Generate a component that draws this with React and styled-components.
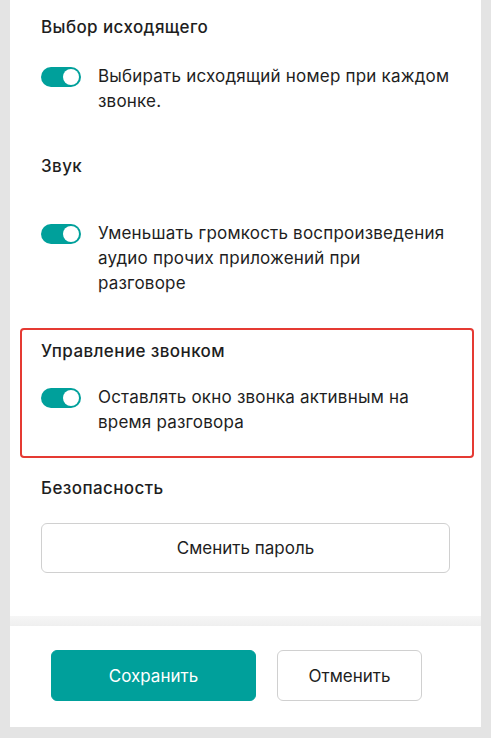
import React, { useState } from 'react';
import styled, { createGlobalStyle } from 'styled-components';

const GlobalStyle = createGlobalStyle`
  html, body {
    margin: 0;
    padding: 0;
    background: #e4e4e4;
  }
  body {
    font-family: Inter, "Noto Sans", sans-serif;
    color: #1e1e1e;
  }
`;

const settings = [
  {
    id: 'outgoing',
    title: 'Выбор исходящего',
    label: 'Выбирать исходящий номер при каждом звонке.',
    gap: 25,
    after: 40,
  },
  {
    id: 'sound',
    title: 'Звук',
    label: 'Уменьшать громкость воспроизведения аудио прочих приложений при разговоре',
    gap: 43,
    after: 32,
  },
  {
    id: 'call',
    title: 'Управление звонком',
    label: 'Оставлять окно звонка активным на время разговора',
    gap: 22,
    after: 18,
    highlighted: true,
  },
];

function App() {
  const [values, setValues] = useState({ outgoing: true, sound: true, call: true });

  const toggle = (id) => {
    setValues((v) => ({ ...v, [id]: !v[id] }));
  };

  return (
    <>
      <GlobalStyle />
      <Page>
        <Panel>
          <Content>
            {settings.map((s) => (
              <Section key={s.id} $after={s.after} $highlighted={s.highlighted}>
                <Title>{s.title}</Title>
                <Row $gap={s.gap}>
                  <Switch $on={values[s.id]} onClick={() => toggle(s.id)}>
                    <Knob $on={values[s.id]} />
                  </Switch>
                  <Label>{s.label}</Label>
                </Row>
              </Section>
            ))}

            <Section $after={0}>
              <Title>Безопасность</Title>
              <WideButton>Сменить пароль</WideButton>
            </Section>
          </Content>

          <Shade />

          <Footer>
            <Button $primary>Сохранить</Button>
            <Button>Отменить</Button>
          </Footer>
        </Panel>
      </Page>
    </>
  );
}

const Page = styled.div`
  min-height: 738px;
  padding: 0 10px 11px;
  box-sizing: border-box;
`;

const Panel = styled.div`
  background: #fff;
  display: flex;
  flex-direction: column;
`;

const Content = styled.div`
  padding: 15px 31px 43px;
  display: flex;
  flex-direction: column;
`;

const Section = styled.div`
  display: flex;
  flex-direction: column;
  margin-bottom: ${({ $after }) => $after}px;
  ${({ $highlighted }) =>
    $highlighted &&
    `
    border: 2px solid #e53a33;
    border-radius: 4px;
    margin-left: -21px;
    margin-right: -24px;
    padding: 9px 22px 21px 19px;
  `}
`;

const Title = styled.div`
  font-size: 17px;
  line-height: 24px;
  font-weight: 500;
  letter-spacing: 0.4px;
  color: #1e1e1e;
`;

const Row = styled.div`
  display: flex;
  align-items: flex-start;
  gap: 17px;
  margin-top: ${({ $gap }) => $gap}px;
`;

const Switch = styled.div`
  flex: 0 0 40px;
  height: 20px;
  margin-top: 3px;
  border-radius: 10px;
  background: ${({ $on }) => ($on ? '#00a09b' : '#c8c8c8')};
  position: relative;
  cursor: pointer;
`;

const Knob = styled.span`
  position: absolute;
  top: 2px;
  left: ${({ $on }) => ($on ? '22px' : '2px')};
  width: 16px;
  height: 16px;
  border-radius: 50%;
  background: #fff;
  transition: left 0.2s;
`;

const Label = styled.div`
  max-width: 352px;
  font-size: 17px;
  line-height: 25px;
  letter-spacing: 0.2px;
  color: #1e1e1e;
`;

const WideButton = styled.button`
  margin-top: 23px;
  height: 50px;
  background: #fff;
  border: 1px solid #d0d0d0;
  border-radius: 6px;
  font-family: inherit;
  font-size: 17px;
  color: #1e1e1e;
  cursor: pointer;
`;

const Shade = styled.div`
  height: 10px;
  background: linear-gradient(#f6f6f6, #efefef);
`;

const Footer = styled.div`
  display: flex;
  gap: 21px;
  padding: 24px 41px 26px;
`;

const Button = styled.button`
  width: ${({ $primary }) => ($primary ? '205px' : '145px')};
  height: 51px;
  border-radius: 6px;
  font-family: inherit;
  font-size: 17px;
  cursor: pointer;
  background: ${({ $primary }) => ($primary ? '#00a09b' : '#fff')};
  color: ${({ $primary }) => ($primary ? '#fff' : '#1e1e1e')};
  border: 1px solid ${({ $primary }) => ($primary ? '#00a09b' : '#d0d0d0')};
`;

export default App;
